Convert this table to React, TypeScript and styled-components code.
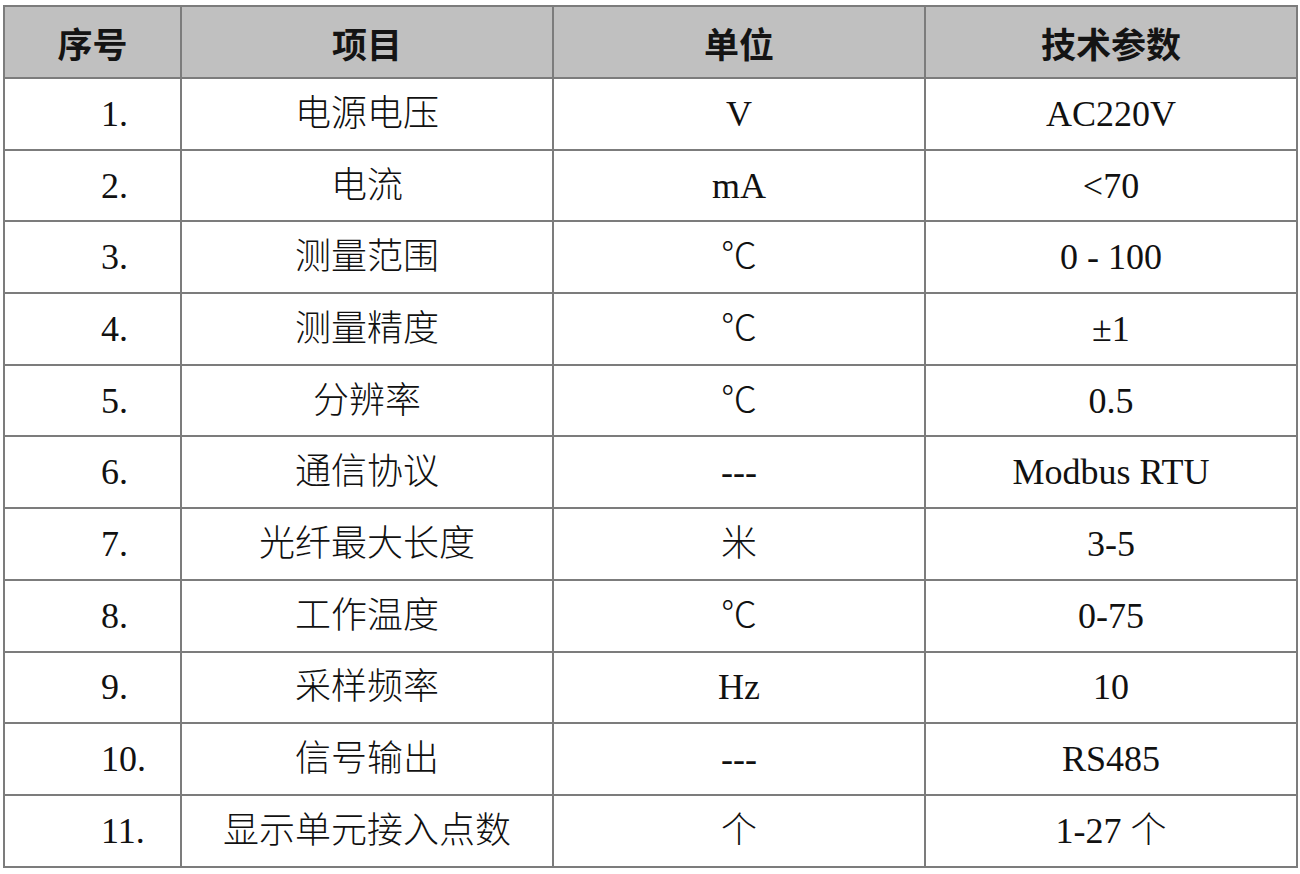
import React from 'react';
import styled, { createGlobalStyle } from 'styled-components';

const GlobalStyle = createGlobalStyle`
  html, body {
    margin: 0;
    padding: 0;
    background: #ffffff;
  }
`;

const Page = styled.div`
  padding: 5px 0 0 3px;
`;

const Table = styled.table`
  width: 1293px;
  table-layout: fixed;
  border-collapse: collapse;
  color: #111111;
  font-family: "Liberation Serif", "Noto Sans CJK SC", serif;
  font-size: 36px;
  line-height: 1;
`;

const HeadRow = styled.tr`
  height: 72px;
  background: #c0c0c0;
`;

const Row = styled.tr`
  height: 71.7px;
`;

const HeadCell = styled.th`
  border: 2px solid #7c7c7c;
  padding: 0;
  text-align: center;
  vertical-align: middle;
  font-family: "Noto Sans CJK SC", sans-serif;
  font-weight: 700;
  font-size: 35px;
  color: #141414;
`;

const Cell = styled.td<{ $index?: boolean }>`
  border: 2px solid #7c7c7c;
  padding: ${p => (p.$index ? '0 0 0 96px' : '0')};
  text-align: ${p => (p.$index ? 'left' : 'center')};
  vertical-align: middle;
  font-weight: 300;
`;

type Spec = {
  item: string;
  unit: string;
  value: string;
};

const specs: Spec[] = [
  { item: '电源电压', unit: 'V', value: 'AC220V' },
  { item: '电流', unit: 'mA', value: '<70' },
  { item: '测量范围', unit: '℃', value: '0 - 100' },
  { item: '测量精度', unit: '℃', value: '±1' },
  { item: '分辨率', unit: '℃', value: '0.5' },
  { item: '通信协议', unit: '---', value: 'Modbus RTU' },
  { item: '光纤最大长度', unit: '米', value: '3-5' },
  { item: '工作温度', unit: '℃', value: '0-75' },
  { item: '采样频率', unit: 'Hz', value: '10' },
  { item: '信号输出', unit: '---', value: 'RS485' },
  { item: '显示单元接入点数', unit: '个', value: '1-27 个' },
];

const App = () => {
  return (
    <Page>
      <GlobalStyle />
      <Table>
        <colgroup>
          <col style={{ width: 177 }} />
          <col style={{ width: 372 }} />
          <col style={{ width: 372 }} />
          <col style={{ width: 372 }} />
        </colgroup>
        <thead>
          <HeadRow>
            <HeadCell>序号</HeadCell>
            <HeadCell>项目</HeadCell>
            <HeadCell>单位</HeadCell>
            <HeadCell>技术参数</HeadCell>
          </HeadRow>
        </thead>
        <tbody>
          {specs.map((s, i) => (
            <Row key={s.item}>
              <Cell $index>{i + 1}.</Cell>
              <Cell>{s.item}</Cell>
              <Cell>{s.unit}</Cell>
              <Cell>{s.value}</Cell>
            </Row>
          ))}
        </tbody>
      </Table>
    </Page>
  );
};

export default App;
